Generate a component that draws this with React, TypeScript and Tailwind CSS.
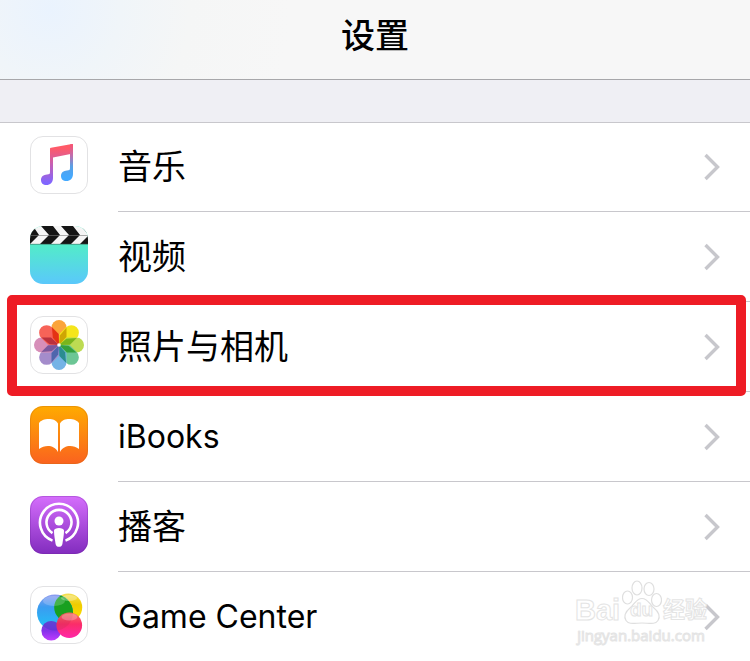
import React from 'react';

const petals = [
  { angle: 0, color: '#fba43a' },
  { angle: 45, color: '#f5e51b' },
  { angle: 90, color: '#bddb52' },
  { angle: 135, color: '#6cc695' },
  { angle: 180, color: '#74b3e6' },
  { angle: 225, color: '#a48ccb' },
  { angle: 270, color: '#d78fb9' },
  { angle: 315, color: '#f76358' },
];

// darker folds where two petals meet
const folds = [
  { angle: 0, color: '#c79a00' },
  { angle: 45, color: '#6cae14' },
  { angle: 90, color: '#2c9a2c' },
  { angle: 135, color: '#1f8580' },
  { angle: 180, color: '#3f5fa8' },
  { angle: 225, color: '#6c4f96' },
  { angle: 270, color: '#b02838' },
  { angle: 315, color: '#e02a08' },
];

function MusicIcon() {
  return (
    <svg viewBox="0 0 58 58" className="size-[58px]" aria-hidden="true">
      <defs>
        <linearGradient id="music" x1="0" y1="0" x2="0" y2="1">
          <stop offset="0.1" stopColor="#ff5a68" />
          <stop offset="0.5" stopColor="#c55fb4" />
          <stop offset="0.95" stopColor="#8066ff" />
        </linearGradient>
        <linearGradient id="musicStem" gradientUnits="userSpaceOnUse" x1="0" y1="8" x2="0" y2="45">
          <stop offset="0.05" stopColor="#f45676" />
          <stop offset="0.3" stopColor="#c46cab" />
          <stop offset="0.6" stopColor="#5a9fe4" />
          <stop offset="0.9" stopColor="#43a9ff" />
        </linearGradient>
      </defs>
      <rect x="0.5" y="0.5" width="57" height="57" rx="12.5" fill="#fff" stroke="#e2e2e4" />
      <path d="M20 12.8Q20 11.9 21 11.7L42 8Q43 7.8 43 8.8V17.5L23 21.5V42C23 46.5 20 49 16.5 49C13 49 11 47 11 44C11 40.5 13.5 39 17 38.6C19.4 38.3 20 38 20 36Z" fill="url(#music)" />
      <path d="M40 8.4L42 8Q43 7.8 43 8.8V38C43 42.5 40 45 36.5 45C33 45 31 43 31 40C31 36.5 33.5 35 37 34.6C39.4 34.3 40 34 40 32Z" fill="url(#musicStem)" />
    </svg>
  );
}

function VideosIcon() {
  return (
    <svg viewBox="0 0 58 58" className="size-[58px]" aria-hidden="true">
      <defs>
        <linearGradient id="videos" x1="0" y1="0" x2="0" y2="1">
          <stop offset="0.3" stopColor="#52edc7" />
          <stop offset="1" stopColor="#5ac8fb" />
        </linearGradient>
        <clipPath id="videosClip">
          <rect width="58" height="58" rx="13" />
        </clipPath>
      </defs>
      <g clipPath="url(#videosClip)">
        <rect width="58" height="58" fill="url(#videos)" />
        <rect width="58" height="18" fill="#f5f5f5" />
        <g fill="#151515">
          <path d="M-8 0H3L9 9L0 18H-10L-1 9Z" />
          <path d="M11 0H23L30 9L21 18H10L19 9Z" />
          <path d="M31 0H43L50 9L41 18H30L39 9Z" />
          <path d="M51 0H62L70 9L61 18H50L59 9Z" />
        </g>
        <path d="M51 0H58V7Z" fill="#f5f5f5" />
        <path d="M0 9.5H58" stroke="#777" strokeWidth="0.6" />
        <path d="M0 18.3H58" stroke="#427b6d" strokeWidth="0.7" />
      </g>
    </svg>
  );
}

function PhotosIcon() {
  return (
    <svg viewBox="0 0 58 58" className="size-[58px]" aria-hidden="true">
      <rect x="0.5" y="0.5" width="57" height="57" rx="12.5" fill="#fff" stroke="#e2e2e4" />
      {petals.map((petal) => (
        <path
          key={petal.angle}
          d="M21.5 11.5A7.5 7.5 0 0 1 36.5 11.5V21L29 29L21.5 21Z"
          fill={petal.color}
          transform={`rotate(${petal.angle} 29 29)`}
        />
      ))}
      {folds.map((fold) => (
        <path
          key={fold.angle}
          d="M29 29L29.8 19.5L36.5 11.5V21Z"
          fill={fold.color}
          fillOpacity="0.85"
          transform={`rotate(${fold.angle} 29 29)`}
        />
      ))}
      <circle cx="29" cy="29" r="1.8" fill="#fff" />
    </svg>
  );
}

function BooksIcon() {
  return (
    <svg viewBox="0 0 58 58" className="size-[58px]" aria-hidden="true">
      <defs>
        <linearGradient id="books" x1="0" y1="0" x2="0" y2="1">
          <stop offset="0" stopColor="#ffab00" />
          <stop offset="1" stopColor="#fa621f" />
        </linearGradient>
      </defs>
      <rect width="58" height="58" rx="13" fill="url(#books)" />
      <rect x="0.5" y="0.5" width="57" height="57" rx="12.5" fill="none" stroke="#c86e10" strokeOpacity="0.35" />
      <path d="M9 17C12 12 25 11 28 17.5V46C24 38.5 15 38.5 9 43Z" fill="#fff" />
      <path d="M49 17C46 12 33 11 30 17.5V46C34 38.5 43 38.5 49 43Z" fill="#fff" />
    </svg>
  );
}

function PodcastsIcon() {
  return (
    <svg viewBox="0 0 58 58" className="size-[58px]" aria-hidden="true">
      <defs>
        <linearGradient id="podcasts" x1="0" y1="0" x2="0" y2="1">
          <stop offset="0" stopColor="#d56efc" />
          <stop offset="1" stopColor="#822cbe" />
        </linearGradient>
      </defs>
      <rect width="58" height="58" rx="13" fill="url(#podcasts)" />
      <rect x="0.5" y="0.5" width="57" height="57" rx="12.5" fill="none" stroke="#6d259c" strokeOpacity="0.3" />
      <g fill="none" stroke="#fff" strokeWidth="2.6">
        <path d="M22.5 44.6A19 19 0 1 1 35.5 44.6" />
        <path d="M22.5 37.1A12.5 12.5 0 1 1 35.5 37.1" />
      </g>
      <circle cx="29" cy="25" r="4.5" fill="#fff" />
      <path d="M24 34.5C24 31 34 31 34 34.5C34 39 33 44 32.4 48C31.8 51.8 26.2 51.8 25.6 48C25 44 24 39 24 34.5Z" fill="#fff" />
    </svg>
  );
}

function GameCenterIcon() {
  return (
    <svg viewBox="0 0 58 58" className="size-[58px]" aria-hidden="true">
      <defs>
        <linearGradient id="gcBlue" x1="0" y1="0" x2="0" y2="1">
          <stop offset="0" stopColor="#8f9cf0" />
          <stop offset="0.35" stopColor="#3a9cf0" />
          <stop offset="1" stopColor="#1fc4f8" />
        </linearGradient>
        <linearGradient id="gcYellow" x1="0" y1="0" x2="0" y2="1">
          <stop offset="0" stopColor="#f3df55" />
          <stop offset="0.4" stopColor="#f0cc00" />
          <stop offset="1" stopColor="#ffe000" />
        </linearGradient>
        <linearGradient id="gcRed" x1="0" y1="0" x2="0" y2="1">
          <stop offset="0" stopColor="#f8785e" />
          <stop offset="0.45" stopColor="#fb2d68" />
          <stop offset="1" stopColor="#ff26a8" />
        </linearGradient>
        <linearGradient id="gcPurple" x1="0" y1="0" x2="0" y2="1">
          <stop offset="0" stopColor="#7653d8" />
          <stop offset="0.5" stopColor="#8430ea" />
          <stop offset="1" stopColor="#c03cff" />
        </linearGradient>
        <clipPath id="gcOverlap">
          <circle cx="25" cy="26.5" r="18" />
        </clipPath>
      </defs>
      <rect x="0.5" y="0.5" width="57" height="57" rx="12.5" fill="#fff" stroke="#e2e2e4" />
      <circle cx="38.2" cy="21.5" r="14" fill="url(#gcYellow)" />
      <circle cx="25" cy="26.5" r="18" fill="url(#gcBlue)" />
      <circle cx="38.2" cy="21.5" r="14" fill="#18a020" clipPath="url(#gcOverlap)" />
      <circle cx="21.2" cy="44.8" r="9.8" fill="url(#gcPurple)" />
      <circle cx="21.2" cy="44.8" r="9.8" fill="#4a35cc" fillOpacity="0.5" clipPath="url(#gcOverlap)" />
      <circle cx="39.3" cy="39.2" r="12.8" fill="url(#gcRed)" />
      <circle cx="39.3" cy="39.2" r="12.8" fill="#c02a50" fillOpacity="0.25" clipPath="url(#gcOverlap)" />
      <ellipse cx="24" cy="15" rx="11" ry="5" fill="#fff" fillOpacity="0.2" />
      <ellipse cx="39" cy="12" rx="8" ry="3" fill="#fff" fillOpacity="0.3" />
      <ellipse cx="39.5" cy="31" rx="8" ry="3.5" fill="#fff" fillOpacity="0.25" />
    </svg>
  );
}

function Chevron() {
  return (
    <svg viewBox="0 0 16 28" className="mr-[30px] h-7 w-4 shrink-0" aria-hidden="true">
      <path d="M1.5 2L13.5 14L1.5 26" fill="none" stroke="#c7c7cc" strokeWidth="3.4" />
    </svg>
  );
}

function Watermark() {
  return (
    <div className="pointer-events-none absolute top-[7px] right-[43px] w-[132px] text-white [-webkit-text-stroke:1px_#e4e4e4]">
      <div className="flex h-[46px] items-end justify-between font-['Liberation_Sans','Noto_Sans_CJK_SC',sans-serif] leading-[30px] font-bold">
        <span className="text-[29px]">Bai</span>
        <span className="relative flex h-[46px] w-10 items-end justify-center">
          <svg viewBox="0 0 40 46" className="absolute inset-0 h-[46px] w-10" fill="#fff" stroke="#dfdfdf" strokeWidth="1.2" aria-hidden="true">
            <ellipse cx="5.5" cy="18.5" rx="5" ry="6.5" />
            <ellipse cx="15" cy="9" rx="5" ry="7" />
            <ellipse cx="27" cy="10" rx="5" ry="6.5" />
            <ellipse cx="34.5" cy="21" rx="5" ry="6.5" />
            <path d="M20 19.5C14 19.5 13 25 8 29C3 33 1.5 38 4 41.5C7 46 13 44 20 44C27 44 33 46 36 41.5C38.5 38 37 33 32 29C27 25 26 19.5 20 19.5Z" />
          </svg>
          <span className="relative text-[19px]">du</span>
        </span>
        <span className="text-[22px]">经验</span>
      </div>
      <div className="text-center font-['Open_Sans',sans-serif] text-[15px] leading-5 whitespace-nowrap">jingyan.baidu.com</div>
    </div>
  );
}

const rows = [
  { name: '音乐', icon: MusicIcon, text: 'text-[34px]' },
  { name: '视频', icon: VideosIcon, text: 'text-[34px]' },
  { name: '照片与相机', icon: PhotosIcon, text: 'text-[34px]', highlighted: true },
  { name: 'iBooks', icon: BooksIcon, text: 'text-[32px]' },
  { name: '播客', icon: PodcastsIcon, text: 'text-[34px]' },
  { name: 'Game Center', icon: GameCenterIcon, text: 'text-[32px]' },
];

export default function App() {
  return (
    <div className="overflow-hidden bg-white font-['Inter','Noto_Sans_CJK_SC',sans-serif] text-black">
      {/* Title bar */}
      <header className="flex h-20 items-start justify-center border-b border-[#a7a7aa] bg-[#f7f7f7] bg-[radial-gradient(circle_at_50px_10px,#eaf3fe_0,#f0f5f9_70px,#f5f6f6_140px,#f7f7f7_240px)] pt-2.5">
        <h1 className="font-['Noto_Sans_CJK_SC',sans-serif] text-[34px] leading-12 font-medium">设置</h1>
      </header>
      <div className="h-[43px] border-b border-[#c8c7cc] bg-[#efeff4]" />

      {/* Settings list */}
      <ul className="-mt-px">
        {rows.map(({ name, icon: Icon, text, highlighted }) => (
          <li key={name} className="group relative">
            <a href="#" className="flex h-[90px] pl-[30px] group-last:h-[89px]">
              <span className="mt-3.5 mr-[30px] shrink-0">
                <Icon />
              </span>
              <span className="flex flex-1 items-center justify-between border-b border-[#c8c7cc] group-last:border-b-0">
                <span className={`leading-12 ${text}`}>{name}</span>
                <Chevron />
              </span>
            </a>
            {highlighted && (
              <div className="pointer-events-none absolute -top-[7px] right-1 -bottom-1 left-[7px] z-10 rounded-[5px] border-10 border-[#ee1c25]" />
            )}
            {name === 'Game Center' && <Watermark />}
          </li>
        ))}
      </ul>
    </div>
  );
}
